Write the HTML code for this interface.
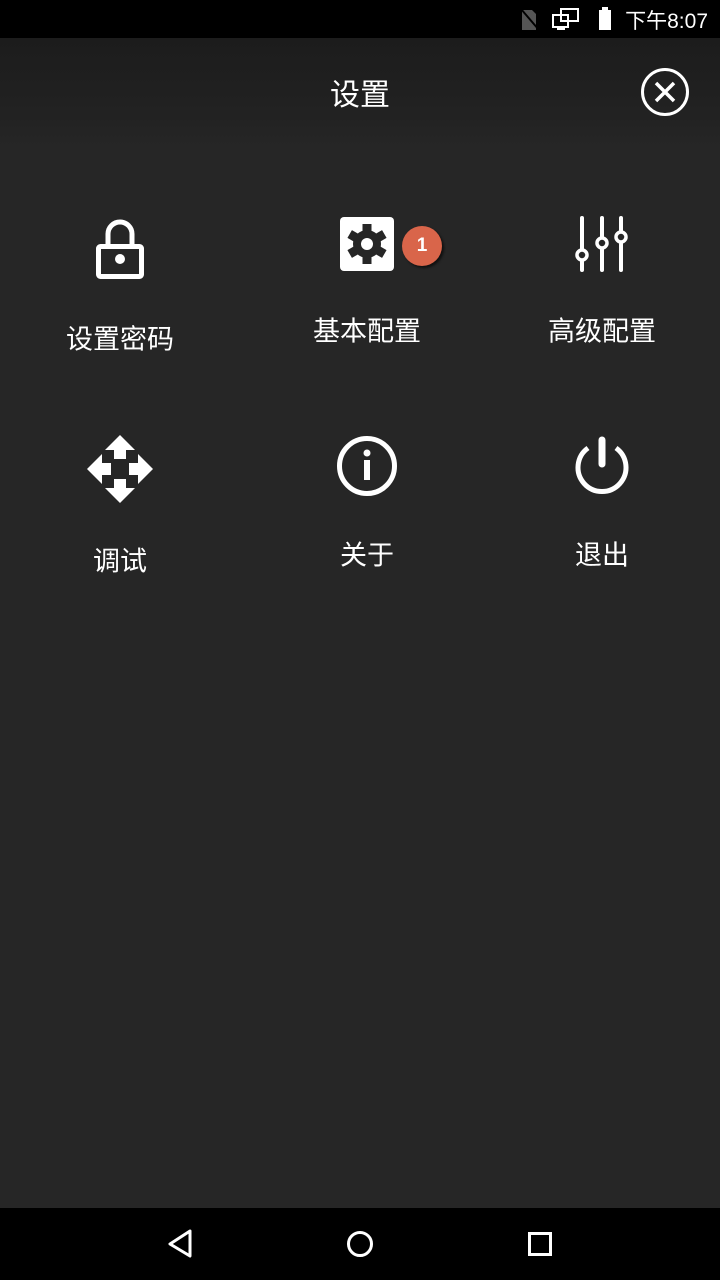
<!DOCTYPE html><html><head><meta charset="utf-8"><style>
body{margin:0;width:720px;height:1280px;background:#262626;position:relative;overflow:hidden;font-family:"Liberation Sans","Noto Sans CJK SC",sans-serif;color:#fff}
.a{position:absolute}
.t{position:absolute;font-size:27px;transform:translate(-50%,-50%);white-space:nowrap}
</style></head><body>
<div class="a" style="left:0;top:0;width:720px;height:38px;background:#000"></div>
<div class="a" style="left:0;top:38px;width:720px;height:110px;background:linear-gradient(#1c1c1c,#222 70%,#262626)"></div>
<div class="a" style="right:12px;top:5px;font-size:21px;color:#fff">下午8:07</div>
<svg class="a" style="left:518px;top:6px" width="100" height="28">
<path d="M4 4h10l4 4v16H4z" fill="#555"/><path d="M3 3l18 21" stroke="#000" stroke-width="2"/>
<rect x="35" y="9" width="15" height="12" fill="none" stroke="#fff" stroke-width="2"/><rect x="43" y="3" width="17" height="12" fill="#000" stroke="#fff" stroke-width="2"/><rect x="35" y="9" width="15" height="12" fill="none" stroke="#fff" stroke-width="2"/><path d="M39 23h8" stroke="#fff" stroke-width="2"/>
<rect x="81" y="4" width="12" height="20" fill="#fff"/><rect x="84" y="1" width="6" height="4" fill="#fff"/>
</svg>
<div class="t" style="left:360px;top:92px;font-size:30px">设置</div>
<svg class="a" style="left:640px;top:67px" width="52" height="52"><circle cx="25" cy="25" r="22.5" fill="none" stroke="#fff" stroke-width="3"/><path d="M16 16l18 18M34 16L16 34" stroke="#fff" stroke-width="3.5"/></svg>
<svg class="a" style="left:90px;top:214px" width="60" height="70"><path d="M18 32V20a12 12 0 0 1 24 0v12" fill="none" stroke="#fff" stroke-width="5"/><rect x="8.5" y="32.5" width="43" height="30" rx="2" fill="none" stroke="#fff" stroke-width="5"/><circle cx="30" cy="45" r="5" fill="#fff"/></svg>
<svg class="a" style="left:340px;top:217px" width="54" height="54"><rect width="54" height="54" rx="4" fill="#fff"/><g transform="translate(27 27)"><g fill="#262626"><circle r="14"/><rect x="-4.5" y="-20" width="9" height="40"/><rect x="-4.5" y="-20" width="9" height="40" transform="rotate(60)"/><rect x="-4.5" y="-20" width="9" height="40" transform="rotate(120)"/></g><circle r="6" fill="#fff"/></g></svg>
<div class="a" style="left:402px;top:226px;width:40px;height:40px;border-radius:50%;background:#d9654a;box-shadow:2px 2px 2px #111;font-size:19px;font-weight:bold;text-align:center;line-height:40px">1</div>
<svg class="a" style="left:570px;top:214px" width="64" height="60"><g stroke="#fff" stroke-width="4" stroke-linecap="round"><path d="M12 4v52M32 4v52M51 4v52"/></g><g fill="#262626" stroke="#fff" stroke-width="3.5"><circle cx="12" cy="41" r="5"/><circle cx="32" cy="29" r="5"/><circle cx="51" cy="23" r="5"/></g></svg>
<svg class="a" style="left:87px;top:435px" width="66" height="68"><g fill="#fff"><path d="M33 0L48 15H18z"/><path d="M33 68L48 53H18z"/><path d="M0 34L15 19V49z"/><path d="M66 34L51 19V49z"/><rect x="27" y="14" width="12" height="10"/><rect x="27" y="44" width="12" height="10"/><rect x="14" y="28" width="10" height="12"/><rect x="42" y="28" width="10" height="12"/></g></svg>
<svg class="a" style="left:336px;top:435px" width="62" height="62"><circle cx="31" cy="31" r="27.5" fill="none" stroke="#fff" stroke-width="5"/><circle cx="31" cy="18" r="3.5" fill="#fff"/><rect x="28" y="25" width="6" height="20" fill="#fff"/></svg>
<svg class="a" style="left:570px;top:434px" width="64" height="64"><path d="M18 14A24 24 0 1 0 46 14" fill="none" stroke="#fff" stroke-width="5"/><path d="M32 6v24" stroke="#fff" stroke-width="7" stroke-linecap="round"/></svg>
<div class="t" style="left:120px;top:337px">设置密码</div>
<div class="t" style="left:367px;top:329px">基本配置</div>
<div class="t" style="left:602px;top:329px">高级配置</div>
<div class="t" style="left:120px;top:559px">调试</div>
<div class="t" style="left:367px;top:553px">关于</div>
<div class="t" style="left:602px;top:553px">退出</div>
<div class="a" style="left:0;top:1208px;width:720px;height:72px;background:#000"></div>
<svg class="a" style="left:0;top:1208px" width="720" height="72"><path d="M190 23L170 36L190 48z" fill="none" stroke="#fff" stroke-width="3" stroke-linejoin="round"/><circle cx="360" cy="36" r="11.5" fill="none" stroke="#fff" stroke-width="3"/><rect x="529.5" y="25.5" width="21" height="21" fill="none" stroke="#fff" stroke-width="3"/></svg>
</body></html>
